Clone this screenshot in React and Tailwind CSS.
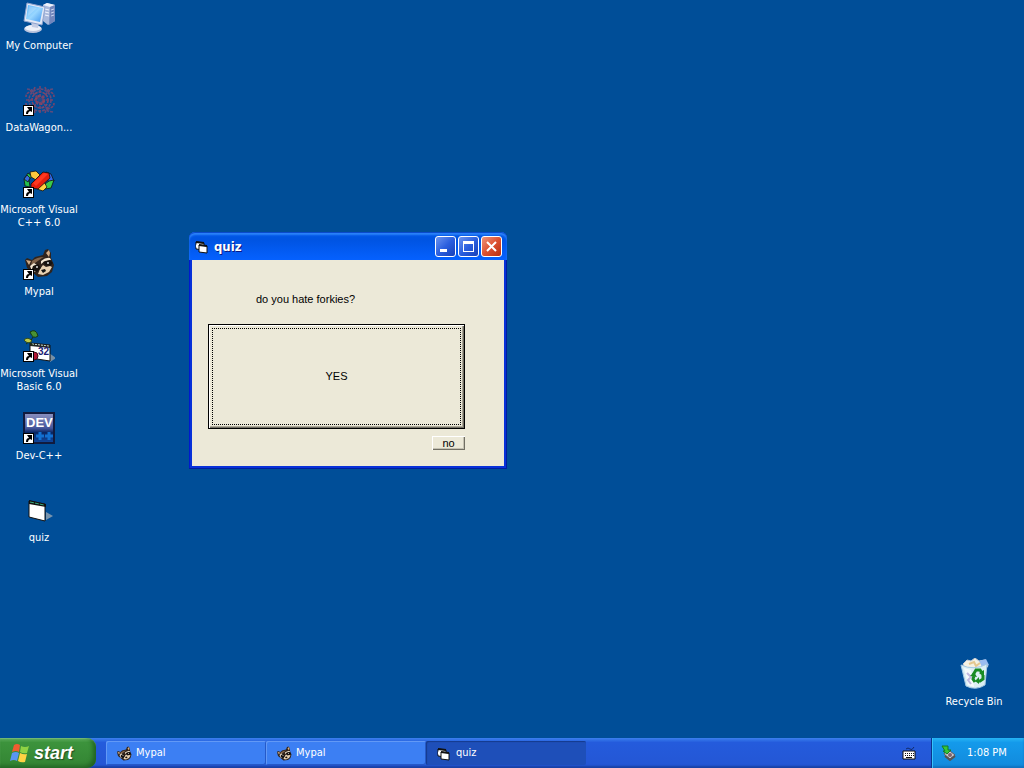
import React from "react";

const TAHOMA = "font-['DejaVu_Sans_Condensed','DejaVu_Sans',sans-serif]";
const SANS = "font-['Liberation_Sans',sans-serif]";

function ShortcutArrow() {
  return (
    <g>
      <rect x="0" y="21" width="11" height="11" fill="#000" />
      <rect x="1" y="22" width="9" height="9" fill="#fff" />
      <path d="M4 23h5v5l-2-1q-2 1-2 3l-2 0q0-4 3-4z" fill="#000" />
    </g>
  );
}

function ComputerIcon() {
  return (
    <svg viewBox="0 0 32 32" className="size-8" aria-hidden="true">
      <defs>
        <linearGradient id="screen" x1="0" y1="0" x2="1" y2="1">
          <stop offset="0" stopColor="#5cb4fb" />
          <stop offset=".5" stopColor="#98d6ff" />
          <stop offset="1" stopColor="#3f95ee" />
        </linearGradient>
      </defs>
      <path d="M20 3l4-2 8 2v16l-7 4-5-4z" fill="#a9b9dc" />
      <path d="M20 3l4-2 8 2-5 2z" fill="#edf2fc" />
      <path d="M27 5l5-2v16l-6 4z" fill="#7186bd" />
      <path d="M22 7l4 1M22 10l4 1M22 13l4 1" stroke="#f1f5ff" />
      <path d="M28 8l3-1M28 11l3-1M28 14l3-1" stroke="#c5d2ee" />
      <ellipse cx="10" cy="27" rx="9" ry="4" fill="#b9c3dd" />
      <ellipse cx="10" cy="26" rx="8" ry="3" fill="#eef1f8" />
      <path d="M8 20l8 1-1 5-6-1z" fill="#c3cce4" />
      <path d="M4 1l18 4-3 18L1 19z" fill="#e3e9f6" stroke="#8ea3cf" />
      <path d="M5 3l15 3-3 14L3 17z" fill="url(#screen)" />
      <path d="M6 4l8 2-9 8z" fill="#fff" opacity=".2" />
    </svg>
  );
}

function WagonIcon() {
  return (
    <svg viewBox="0 0 32 32" className="size-8" aria-hidden="true">
      <g fill="none" stroke="#71466e" strokeWidth="1.6" strokeDasharray="3 1">
        <circle cx="17" cy="16" r="4" stroke="#96425a" strokeWidth="2.5" />
        <circle cx="17" cy="16" r="8" stroke="#80466a" />
        <circle cx="17" cy="16" r="11" stroke="#654b7a" />
        <path d="M17 2v28M3 16h28M7 6l20 20M27 6L7 26" />
        <path d="M12 3q-1 4-5 5t-4 5M22 3q1 4 5 5t4 5M12 29q-1-4-5-5t-4-5M22 29q1-4 5-5t4-5" />
        <path d="M4 5l5 1 2 4M30 5l-5 1-2 4M30 28l-5-1-2-4" stroke="#604c7c" />
      </g>
      <circle cx="17" cy="16" r="2" fill="#254c89" />
      <ShortcutArrow />
    </svg>
  );
}

function VisualCIcon() {
  return (
    <svg viewBox="0 0 32 32" className="size-8" aria-hidden="true">
      <g stroke="#111" strokeWidth=".8" strokeLinejoin="round">
        <path d="M1 13l4-6 4 3-3 4 1 7-5-1z" fill="#25c04b" />
        <path d="M1 13l3-4 3 3-2 4z" fill="#3769de" />
        <path d="M7 6l6-1 4 4-4 5-5-3z" fill="#ffc83d" />
        <path d="M23 6l5 2 3 7-4 2-4-5z" fill="#3169e8" />
        <path d="M31 14l-3 8-6 1v-5l4-3z" fill="#3acb4a" />
        <path d="M15 18l6-2 3 5-4 4-6-2z" fill="#ffd13f" />
        <path d="M8 18L20 6l6 1 1 5-12 11-7-1z" fill="#e51e0c" />
      </g>
      <path d="M10 17L21 7l4 1-12 12z" fill="#ff3820" />
      <ShortcutArrow />
    </svg>
  );
}

function RaccoonHead() {
  return (
    <g>
      <path d="M2 12l2-2 5 2 3-3 8-2 2-5 3-1 3 4v5l3 7-2 7-5 4-9 1-6-5-5-4z" fill="#30241d" />
      <path d="M3 12l5 1-2 4zM23 5l3-3 1 3-1 4z" fill="#d3ad87" />
      <path d="M9 13q5-4 12-4l-2 1-7 5-4 3z" fill="#80634a" />
      <path d="M7 18l4-3 3 2-3 1-1 4 3 2-4-1zM18 13q5-4 9-3l1 2-6 1-4 3z" fill="#f3e7d3" />
      <path d="M17 21l3-4 3 2 4-1 2 1-3 5-6 3-5-1z" fill="#e9d2b2" />
      <path d="M10 18l5-2 3 4-4 4-5-3zM20 14l7-2 3 3-3 3-5-1z" fill="#16120f" />
      <circle cx="14" cy="19" r="1" fill="#ddd" />
      <circle cx="25" cy="15" r="1" fill="#ddd" />
      <path d="M18 22l4-1 1 2-3 2z" fill="#111" />
    </g>
  );
}

function RaccoonIcon() {
  return (
    <svg viewBox="0 0 32 32" className="size-8" aria-hidden="true">
      <RaccoonHead />
      <ShortcutArrow />
    </svg>
  );
}

function VisualBasicIcon() {
  return (
    <svg viewBox="0 0 32 32" className="size-8" aria-hidden="true">
      <path d="M26 23l7 5-6 4z" fill="#7890a5" />
      <path d="M7 13l20 2v16l-20-3z" fill="#fff" stroke="#111" />
      <path d="M7 13l20 2v3L7 16z" fill="#232323" />
      <path d="M9 14l17 2" stroke="#c8ddd0" strokeDasharray="2 1" />
      <path d="M3 14q4-4 7 2M7 12l3-5" stroke="#173411" fill="none" />
      <path d="M7 2q6-4 8 4q-5 4-8-4z" fill="#499234" stroke="#153813" />
      <path d="M1 10q4-4 8 1q-4 4-8-1z" fill="#bec949" stroke="#34501f" />
      <circle cx="11" cy="26" r="4" fill="#b41632" stroke="#430b16" />
      <text x="15" y="25" fontSize="10" fontWeight="bold" fill="#1b1b73" className={SANS}>32</text>
      <ShortcutArrow />
    </svg>
  );
}

function DevIcon() {
  return (
    <svg viewBox="0 0 32 32" className="size-8" aria-hidden="true">
      <defs>
        <linearGradient id="dev" x1="0" y1="0" x2="0" y2="1">
          <stop stopColor="#8c92c0" />
          <stop offset=".5" stopColor="#46579c" />
          <stop offset=".65" stopColor="#092663" />
          <stop offset="1" stopColor="#104aa2" />
        </linearGradient>
      </defs>
      <rect x="1" y="1" width="30" height="30" fill="url(#dev)" stroke="#111b3e" strokeWidth="2" />
      <text x="3" y="15" fontSize="13" fontWeight="bold" fill="#fff" className={SANS}>DEV</text>
      <path d="M13 24h8M17 20v8M22 24h8M26 20v8" stroke="#126fd0" strokeWidth="3" />
      <ShortcutArrow />
    </svg>
  );
}

function FormIcon() {
  return (
    <svg viewBox="0 0 32 32" className="size-8" aria-hidden="true">
      <path d="M23 18l7 4-7 4z" fill="#7894ad" />
      <path d="M6 7l16 3v17L6 23z" fill="#fff" stroke="#111" />
      <path d="M6 6l17 4v3L6 10z" fill="#111" />
      <path d="M7 8l14 3" stroke="#39a97b" strokeDasharray="4 1" />
    </svg>
  );
}

function RecycleIcon() {
  return (
    <svg viewBox="0 0 32 32" className="size-8" aria-hidden="true">
      <path d="M5 6l4-4 4 1 4-3 4 3 6-1 3 6-5 6-17-2z" fill="#f4f1e4" stroke="#c5cbd5" />
      <path d="M21 3l7-2 3 6-7 2z" fill="#9abcf0" />
      <path d="M11 6l5-2 2 4 4-3" fill="none" stroke="#e4c790" strokeWidth="2" />
      <path d="M3 7q13 6 26-1l-2 21q-9 6-19 1z" fill="#dceff4" stroke="#a3c7e4" />
      <path d="M6 10l4 17 6 2-3-17z" fill="#fff" opacity=".7" />
      <path d="M9 15l4 4-3 3 3 4" stroke="#c0b8df" fill="none" strokeWidth="2" />
      <g fill="none" stroke="#188b24" strokeWidth="3">
        <path d="M15 17l3-5h4l2 3" />
        <path d="M25 17l0 4-3 2h-2" />
        <path d="M17 24l-2-3 1-3" />
      </g>
      <path d="M21 15l5-3v7zM21 19v7l-4-3zM12 18l4-4 3 5z" fill="#188b24" />
    </svg>
  );
}

function SmallForm() {
  return (
    <svg viewBox="0 0 16 16" className="size-4 shrink-0" aria-hidden="true">
      <path d="M2 3l8 1v7l-8-1z" fill="#fff" stroke="#111" />
      <path d="M2 3l8 1" stroke="#111" strokeWidth="2" />
      <path d="M5 6l8 1v7l-8-1z" fill="#fff" stroke="#111" />
      <path d="M5 6l8 1" stroke="#111" strokeWidth="2" />
      <path d="M3 5.5v3M6 9.5l6 1" stroke="#fff" strokeWidth="2" />
    </svg>
  );
}

function SmallRaccoon() {
  return (
    <svg viewBox="0 0 32 32" className="size-4 shrink-0" aria-hidden="true">
      <RaccoonHead />
    </svg>
  );
}

function StartFlag() {
  return (
    <svg viewBox="0 0 20 20" className="size-5" aria-hidden="true">
      <path d="M4 2q3-2 6 0L9 9Q6 7 2 9z" fill="#f05c30" />
      <path d="M11 3q4 2 8 0l-2 7q-4 1-7-1z" fill="#8ed244" />
      <path d="M2 10q4-2 7 0l-2 8q-3-2-7 0z" fill="#5a96f4" />
      <path d="M10 10q4 2 7 1l-2 8q-4 1-7-1z" fill="#ffd343" />
    </svg>
  );
}

const shortcuts = [
  { name: "My Computer", Icon: ComputerIcon },
  { name: "DataWagon...", Icon: WagonIcon },
  { name: "Microsoft Visual C++ 6.0", Icon: VisualCIcon },
  { name: "Mypal", Icon: RaccoonIcon },
  { name: "Microsoft Visual Basic 6.0", Icon: VisualBasicIcon },
  { name: "Dev-C++", Icon: DevIcon },
  { name: "quiz", Icon: FormIcon },
];

const tasks = [
  { name: "Mypal", Icon: SmallRaccoon, active: false },
  { name: "Mypal", Icon: SmallRaccoon, active: false },
  { name: "quiz", Icon: SmallForm, active: true },
];

function DesktopIcon({ name, Icon }) {
  return (
    <button type="button" className="flex h-[82px] w-[78px] flex-col items-center gap-[5px] text-center text-[11px] leading-[13px] text-white">
      <Icon />
      <span>{name}</span>
    </button>
  );
}

function QuizWindow() {
  const control = "flex size-[21px] items-center justify-center rounded-[3px] border border-white bg-linear-to-br";
  return (
    <section aria-label="quiz" className="absolute top-[232px] left-[189px] flex w-[318px] flex-col rounded-t-[6px] bg-[#0831d9] px-[3px] pb-[3px] shadow-[inset_-1px_-1px_#001ea0,inset_1px_0_#0019cf]">
      <header className="-mx-[3px] flex h-7 items-center gap-1 rounded-t-[6px] bg-linear-to-b from-[#0058e6] via-[#0054e3] via-30% to-[#0561ff] pt-px pr-[5px] pl-[5px] shadow-[inset_0_1px_#0b4bcc,inset_0_3px_2px_#2b83fa]">
        <SmallForm />
        <h1 className="flex-1 text-[13px] font-bold text-white [text-shadow:1px_1px_#0a1883]">quiz</h1>
        <div className="flex gap-[2px]">
          <button type="button" aria-label="Minimize" className={control + " from-[#6c93ee] via-[#2b5fdf] to-[#1740b8]"}>
            <svg viewBox="0 0 19 19" className="size-[19px]"><path d="M4 12h7v3H4z" fill="#fff" /></svg>
          </button>
          <button type="button" aria-label="Maximize" className={control + " from-[#6c93ee] via-[#2b5fdf] to-[#1740b8]"}>
            <svg viewBox="0 0 19 19" className="size-[19px]"><path d="M4 4h11v11H4zM5 7v7h9V7z" fill="#fff" fillRule="evenodd" /></svg>
          </button>
          <button type="button" aria-label="Close" className={control + " from-[#ee9278] via-[#dc5030] to-[#b92f0d]"}>
            <svg viewBox="0 0 19 19" className="size-[19px]"><path d="M5 5l9 9M14 5l-9 9" stroke="#fff" strokeWidth="2" /></svg>
          </button>
        </div>
      </header>
      <div className={"flex flex-col bg-[#ece9d8] pt-8 pr-[39px] pb-4 pl-4 text-[11px] text-black " + SANS}>
        <p className="pl-12 leading-[14px]">do you hate forkies?</p>
        <button type="button" className="mt-[18px] flex h-[105px] border border-black p-[3px] shadow-[inset_1px_1px_#fff,inset_-1px_-1px_#716f64,inset_-2px_-2px_#aca899]">
          <span className="flex h-full w-full items-center justify-center border border-dotted border-black">YES</span>
        </button>
        <button type="button" className="mt-[7px] flex h-[14px] w-[33px] items-center justify-center self-end pt-px leading-[13px] shadow-[inset_1px_1px_#fff,inset_-1px_-1px_#716f64,inset_-2px_-2px_#c5c2b3]">no</button>
      </div>
    </section>
  );
}

function Taskbar() {
  return (
    <footer className="flex h-[30px] items-stretch bg-linear-to-b from-[#3c80ee] via-[#245bdc] via-15% to-[#2456d4] text-[11px] text-white shadow-[inset_0_-2px_2px_#1941a5]">
      <button type="button" className="flex w-24 items-center gap-1 rounded-r-[9px] bg-linear-to-b from-[#5faf5f] via-[#3c933c] via-15% to-[#338433] pl-[10px] shadow-[inset_-3px_-2px_4px_#216322,inset_0_1px_1px_#80c783]">
        <StartFlag />
        <span className="font-['Liberation_Sans',sans-serif] text-[18px] leading-5 font-bold italic [text-shadow:1px_1px_1px_#244c24]">start</span>
      </button>
      <nav aria-label="Open windows" className="ml-[10px] flex flex-1 py-[3px]">
        {tasks.map(({ name, Icon, active }, i) => (
          <button
            key={i}
            type="button"
            className={
              "flex w-40 items-center gap-1 rounded-[2px] pt-px pl-[10px] " +
              (active
                ? "bg-[#1e4fb9] shadow-[inset_1px_1px_1px_#153a8d]"
                : "bg-[#3c7ff3] shadow-[inset_1px_1px_#6299f6,inset_-1px_-1px_#2559c8]")
            }
          >
            <Icon />
            <span>{name}</span>
          </button>
        ))}
      </nav>
      <button type="button" aria-label="Keyboard" className="flex w-11 items-center justify-center">
        <svg viewBox="0 0 14 14" className="size-[14px]">
          <path d="M4 3q2-2 4 0t4-2" fill="none" stroke="#102a6b" />
          <path d="M1 5h12v8H1z" fill="#fff" stroke="#111" />
          <path d="M3 7.5h9M3 9.5h9" stroke="#111" strokeDasharray="1 1" />
          <path d="M4 11.5h6" stroke="#111" />
        </svg>
      </button>
      <div className="flex w-[93px] items-center gap-[10px] border-l border-[#0b348c] bg-linear-to-b from-[#26b4f4] via-[#149aeb] via-15% to-[#1289dc] pl-[9px] shadow-[inset_1px_0_#37c4fb,inset_0_-2px_2px_#1172bf]">
        <svg viewBox="0 0 16 16" className="size-4 shrink-0" aria-hidden="true">
          <path d="M3 8l6-2 5 4-5 4-5-4z" fill="#cbc9cb" stroke="#555b67" />
          <path d="M4 11l5 4 5-4" fill="none" stroke="#555" strokeWidth="2" />
          <circle cx="9" cy="10" r="2" fill="#7d6270" />
          <path d="M1 1h6v4h3L6 9 2 6h2z" fill="#35c737" stroke="#147a28" />
        </svg>
        <time className="whitespace-nowrap">1:08 PM</time>
      </div>
    </footer>
  );
}

export default function App() {
  return (
    <div className={"flex h-screen flex-col bg-[#004e98] " + TAHOMA}>
      <main className="relative flex flex-1 items-end justify-between">
        <div className="flex flex-col self-start pt-[2px]">
          {shortcuts.map((item) => (
            <DesktopIcon key={item.name} {...item} />
          ))}
        </div>
        <div className="-mb-[2px] pr-[11px]">
          <DesktopIcon name="Recycle Bin" Icon={RecycleIcon} />
        </div>
        <QuizWindow />
      </main>
      <Taskbar />
    </div>
  );
}
